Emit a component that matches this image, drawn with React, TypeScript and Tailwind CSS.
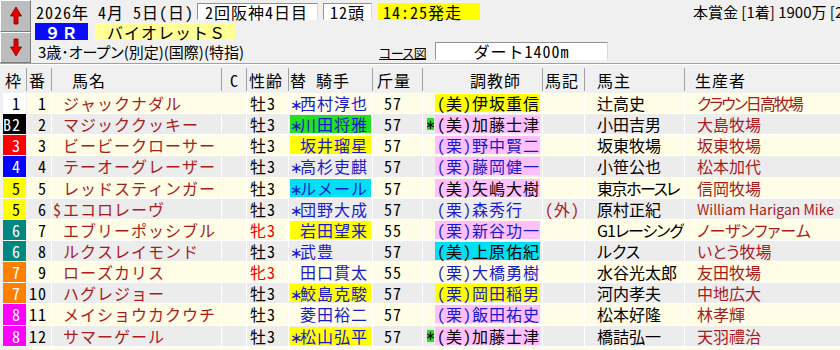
import React from "react";

/* 出馬表 — 上部のレース情報と 12頭の一覧 */

const PROP = "font-['Noto_Sans_CJK_JP',sans-serif] [font-feature-settings:'palt']";

type Horse = {
  waku: string;
  wc: string;
  ban: string;
  pre: string;
  name: string;
  sex: string;
  fem?: boolean;
  jm: string;
  jockey: string;
  jbg: string;
  kin: string;
  tm?: boolean;
  tr: string;
  kuri: boolean;
  tbg: string;
  mark?: string;
  owner: string;
  oc?: string;
  breeder: string;
  bc?: string;
};

const horses: Horse[] = [
  { waku: "1", wc: "bg-white text-black", ban: "1", pre: "", name: "ジャックナダル", sex: "牡3", jm: "*", jockey: "西村淳也", jbg: "", kin: "57", tr: "(美)伊坂重信", kuri: false, tbg: "bg-[#ffff00]", owner: "辻高史", breeder: "クラウン日高牧場", bc: "text-[16px] tracking-[-2px]" },
  { waku: "B2", wc: "bg-black text-white", ban: "2", pre: "", name: "マジッククッキー", sex: "牡3", jm: "*", jockey: "川田将雅", jbg: "bg-[#22e022]", kin: "57", tm: true, tr: "(美)加藤士津", kuri: false, tbg: "bg-[#ffc0ff]", owner: "小田吉男", breeder: "大島牧場" },
  { waku: "3", wc: "bg-[#ff0000] text-white", ban: "3", pre: "", name: "ビービークローサー", sex: "牡3", jm: "", jockey: "坂井瑠星", jbg: "bg-[#ffff00]", kin: "57", tr: "(栗)野中賢二", kuri: true, tbg: "bg-[#ffc0ff]", owner: "坂東牧場", breeder: "坂東牧場" },
  { waku: "4", wc: "bg-[#0000ff] text-white", ban: "4", pre: "", name: "テーオーグレーザー", sex: "牡3", jm: "*", jockey: "高杉吏麒", jbg: "", kin: "57", tr: "(栗)藤岡健一", kuri: true, tbg: "bg-[#ffc0ff]", owner: "小笹公也", breeder: "松本加代" },
  { waku: "5", wc: "bg-[#ffff00] text-black", ban: "5", pre: "", name: "レッドスティンガー", sex: "牡3", jm: "*", jockey: "ルメール", jbg: "bg-[#00e0f4]", kin: "57", tr: "(美)矢嶋大樹", kuri: false, tbg: "bg-[#ffc0ff]", owner: "東京ホースレ", oc: "tracking-[-1.5px]", breeder: "信岡牧場" },
  { waku: "5", wc: "bg-[#ffff00] text-black", ban: "6", pre: "$", name: "エコロレーヴ", sex: "牡3", jm: "*", jockey: "団野大成", jbg: "", kin: "57", tr: "(栗)森秀行", kuri: true, tbg: "", mark: "(外)", owner: "原村正紀", breeder: "William Harigan Mike", bc: "text-[14px] tracking-normal" },
  { waku: "6", wc: "bg-[#00877f] text-white", ban: "7", pre: "", name: "エブリーポッシブル", sex: "牝3", fem: true, jm: "", jockey: "岩田望来", jbg: "bg-[#ffff00]", kin: "55", tr: "(栗)新谷功一", kuri: true, tbg: "bg-[#ffc0ff]", owner: "G1レーシング", oc: "tracking-[-1px]", breeder: "ノーザンファーム" },
  { waku: "6", wc: "bg-[#00877f] text-white", ban: "8", pre: "", name: "ルクスレイモンド", sex: "牡3", jm: "*", jockey: "武豊", jbg: "", kin: "57", tr: "(美)上原佑紀", kuri: false, tbg: "bg-[#00e0f4]", owner: "ルクス", breeder: "いとう牧場" },
  { waku: "7", wc: "bg-[#ff8000] text-white", ban: "9", pre: "", name: "ローズカリス", sex: "牝3", fem: true, jm: "", jockey: "田口貫太", jbg: "", kin: "55", tr: "(栗)大橋勇樹", kuri: true, tbg: "", owner: "水谷光太郎", breeder: "友田牧場" },
  { waku: "7", wc: "bg-[#ff8000] text-white", ban: "10", pre: "", name: "ハグレジョー", sex: "牡3", jm: "*", jockey: "鮫島克駿", jbg: "bg-[#ffff00]", kin: "57", tr: "(栗)岡田稲男", kuri: true, tbg: "bg-[#ffff00]", owner: "河内孝夫", breeder: "中地広大" },
  { waku: "8", wc: "bg-[#ff00ff] text-white", ban: "11", pre: "", name: "メイショウカクウチ", sex: "牡3", jm: "", jockey: "菱田裕二", jbg: "", kin: "57", tr: "(栗)飯田祐史", kuri: true, tbg: "bg-[#ffc0ff]", owner: "松本好隆", breeder: "林孝輝" },
  { waku: "8", wc: "bg-[#ff00ff] text-white", ban: "12", pre: "", name: "サマーゲール", sex: "牡3", jm: "*", jockey: "松山弘平", jbg: "bg-[#ffff00]", kin: "57", tm: true, tr: "(美)加藤士津", kuri: false, tbg: "bg-[#ffc0ff]", owner: "橋詰弘一", breeder: "天羽禮治" },
];

function ArrowButton({ up }: { up: boolean }) {
  return (
    <div className="flex flex-1 items-center justify-center border border-t-white border-l-white border-b-[#7a7a7a] border-r-[#7a7a7a] bg-[#bdbdbd]">
      <svg width="14" height="19" viewBox="0 0 14 19">
        {up ? (
          <polygon points="7,1 12.5,10 9,10 9,18 5,18 5,10 1.5,10" fill="#e60000" stroke="#7a0000" strokeWidth="0.8" />
        ) : (
          <polygon points="7,18 12.5,9 9,9 9,1 5,1 5,9 1.5,9" fill="#e60000" stroke="#7a0000" strokeWidth="0.8" />
        )}
      </svg>
    </div>
  );
}

function Head({ w, pl, children, last }: { w: string; pl: string; children: React.ReactNode; last?: boolean }) {
  return (
    <div className={`flex h-full shrink-0 items-center overflow-hidden whitespace-nowrap ${w} ${pl} ${last ? "flex-1" : "border-r border-[#a0a0a0]"}`}>
      {children}
    </div>
  );
}

// 替(乗り替わり)の印
function Star() {
  return <span className="relative top-[1px] inline-block w-[9px] font-['DejaVu_Sans',sans-serif] text-[15px] tracking-normal">∗</span>;
}

function Row({ h, odd }: { h?: Horse; odd: boolean }) {
  const bg = odd ? "bg-[#fffde6]" : "bg-[#ececec]";
  return (
    <div className="flex h-[21.15px] border-b border-white">
      <div className="h-full w-[27px] shrink-0 pl-[3px] pr-px">
        {h && <div className={`flex h-full items-center justify-end pr-[5px] ${h.wc}`}>{h.waku}</div>}
      </div>
      <div className={`flex h-full w-[25px] shrink-0 items-center justify-end border-r border-white pr-[4px] ${bg}`}>{h?.ban}</div>
      <div className={`flex h-full w-[170px] shrink-0 items-center overflow-hidden whitespace-nowrap border-r border-white pl-px text-[#a81c1c] ${bg}`}>
        <span className="w-[10px] shrink-0">{h?.pre}</span>
        <span>{h?.name}</span>
      </div>
      <div className={`h-full w-[25px] shrink-0 border-r border-white ${bg}`} />
      <div className={`flex h-full w-[42px] shrink-0 items-center border-r border-white pl-[3px] ${h?.fem ? "text-[#f00000]" : "text-black"} ${bg}`}>{h?.sex}</div>
      <div className={`flex h-full w-[84px] shrink-0 items-center border-r border-white pl-px ${bg}`}>
        {h && (
          <div className={`flex h-[18px] w-[81px] items-center whitespace-nowrap text-[#1a1acc] ${h.jbg}`}>
            <span className="w-[10px] shrink-0">{h.jm === "*" ? <Star /> : ""}</span>
            <span>{h.jockey}</span>
          </div>
        )}
      </div>
      <div className={`flex h-full w-[50px] shrink-0 items-center border-r border-white pl-[11px] ${bg}`}>{h?.kin}</div>
      <div className={`flex h-full w-[120px] shrink-0 items-center border-r border-white pl-[4px] ${bg}`}>
        {h && (
          <>
            <span className={`flex h-[12px] w-[7px] shrink-0 items-center justify-center overflow-hidden text-black ${h.tm ? "bg-[#22e022]" : ""}`}>
              {h.tm ? <span className="font-['DejaVu_Sans',sans-serif] text-[13px] tracking-normal">∗</span> : ""}
            </span>
            <div className={`ml-px flex h-[18px] w-[105px] items-center whitespace-nowrap pl-[2px] ${h.kuri ? "text-[#1a1acc]" : "text-black"} ${h.tbg}`}>
              {h.tr}
            </div>
          </>
        )}
      </div>
      <div className={`flex h-full w-[42px] shrink-0 items-center overflow-hidden whitespace-nowrap border-r border-white pl-[2px] text-[#a81c1c] ${bg}`}>{h?.mark}</div>
      <div className={`flex h-full w-[100px] shrink-0 items-center overflow-hidden whitespace-nowrap border-r border-white pl-[12px] text-black ${PROP} ${h?.oc ?? "tracking-normal"} ${bg}`}>{h?.owner}</div>
      <div className={`flex h-full min-w-0 flex-1 items-center overflow-hidden whitespace-nowrap pl-[12px] text-[#a81c1c] ${PROP} ${h?.bc ?? "tracking-normal"} ${bg}`}>{h?.breeder}</div>
    </div>
  );
}

export default function App() {
  return (
    <div className="h-[350px] w-[840px] overflow-hidden bg-[#f0f0f0] font-['Noto_Sans_Mono_CJK_JP','Noto_Sans_CJK_JP',sans-serif] text-[16px] leading-none tracking-[1px] text-black [font-feature-settings:'hwid']">
      {/* レース情報 */}
      <div className="flex h-[63px]">
        <div className="flex w-[31px] shrink-0 flex-col">
          <ArrowButton up />
          <ArrowButton up={false} />
        </div>
        <div className="flex min-w-0 flex-1 flex-col overflow-hidden pt-[3px]">
          <div className="flex h-[17px] items-center whitespace-nowrap pl-[5px]">
            <span className="w-[161px] shrink-0">2026年 4月 5日(日)</span>
            <span className="flex h-[17px] w-[121px] shrink-0 items-center border border-t-[#909090] border-l-[#909090] border-b-white border-r-[#d8d8d8] bg-white pl-[7px]">2回阪神4日目</span>
            <span className="ml-[5px] flex h-[17px] w-[49px] shrink-0 items-center border border-t-[#909090] border-l-[#909090] border-b-white border-r-[#d8d8d8] bg-white pl-[6px]">12頭</span>
            <span className="ml-[6px] flex h-[17px] w-[102px] shrink-0 items-center bg-[#ffff00] pl-[5px]">14:25発走</span>
            <span className={`ml-[213px] shrink-0 text-[15px] tracking-normal ${PROP}`}>本賞金 [1着] 1900万 [2着] 760万</span>
          </div>
          <div className="mt-[3px] flex h-[17px] items-center pl-[4px]">
            <span className="flex h-[17px] w-[53px] items-center justify-center bg-[#0a0aff] font-bold text-white [font-feature-settings:normal]">９Ｒ</span>
            <span className="ml-[7px] flex h-[17px] w-[140px] items-center bg-[#ffff96] pl-[12px] [font-feature-settings:normal]">バイオレットＳ</span>
          </div>
          <div className="mt-[2px] flex h-[18px] items-center whitespace-nowrap pl-[7px]">
            <span className={`w-[341px] shrink-0 text-[15px] tracking-normal ${PROP}`}>3歳･オープン(別定)(国際)(特指)</span>
            <span className={`w-[56px] shrink-0 pt-[2px] text-[13px] tracking-[-0.5px] underline ${PROP}`}>コース図</span>
            <span className="flex h-[18px] w-[173px] shrink-0 items-center justify-center border border-t-[#909090] border-l-[#909090] border-b-white border-r-[#d8d8d8] bg-white">ダート1400m</span>
          </div>
        </div>
      </div>
      <div className="h-[2px] border-t border-b border-t-[#a0a0a0] border-b-white" />
      <div className="h-[3px]" />

      {/* 見出し */}
      <div className="flex h-[23px]">
        <Head w="w-[27px]" pl="pl-[5px]">枠</Head>
        <Head w="w-[25px]" pl="pl-[2px]">番</Head>
        <Head w="w-[170px]" pl="pl-[20px]">馬名</Head>
        <Head w="w-[25px]" pl="pl-[8px]">C</Head>
        <Head w="w-[42px]" pl="pl-[2px]">性齢</Head>
        <Head w="w-[84px]" pl="pl-px">替 騎手</Head>
        <Head w="w-[50px]" pl="pl-[4px]">斤量</Head>
        <Head w="w-[120px]" pl="pl-[47px]">調教師</Head>
        <Head w="w-[42px]" pl="pl-[2px]">馬記</Head>
        <Head w="w-[100px]" pl="pl-[12px]">馬主</Head>
        <Head w="w-[155px]" pl="pl-[10px]" last>生産者</Head>
      </div>
      <div className="h-[2px]" />

      {/* 出走馬 */}
      {horses.map((h, i) => (
        <Row key={h.ban} h={h} odd={i % 2 === 0} />
      ))}
      <Row odd />
    </div>
  );
}
